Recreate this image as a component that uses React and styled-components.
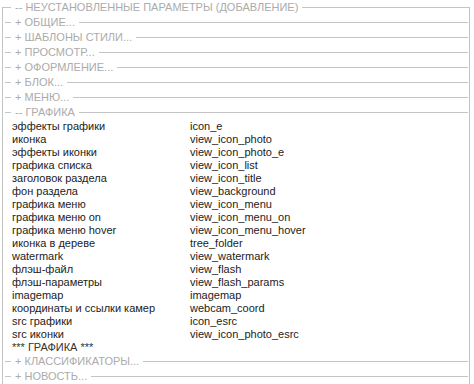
import React from "react";
import styled, { createGlobalStyle } from "styled-components";

const GlobalStyle = createGlobalStyle`
  html, body {
    margin: 0;
    padding: 0;
    background: #fff;
  }
  body {
    font-family: "Liberation Sans", Arial, sans-serif;
    font-size: 11px;
    overflow: hidden;
  }
`;

const LINE = "#c4c4c4";

const Frame = styled.fieldset`
  box-sizing: border-box;
  width: 468px;
  margin: 0 0 0 2px;
  padding: 0 1px 0 2px;
  border: 1px solid ${LINE};
  border-bottom: none;
  min-inline-size: 0;
`;

const Section = styled.fieldset`
  margin: 0;
  padding: 0;
  border: none;
  border-top: 1px solid ${LINE};
  min-inline-size: 0;
`;

const Legend = styled.legend`
  margin-left: 6px;
  padding: 0 4px;
  height: 15px;
  line-height: 15px;
  font-size: 11px;
  color: #ababab;
  text-transform: uppercase;
  white-space: nowrap;
`;

const Table = styled.div`
  display: grid;
  grid-template-columns: 178px 1fr;
  padding: 0 0 0 7px;
  color: #1c1c1c;
  font-size: 11px;
  line-height: 13px;
`;

const Cell = styled.div`
  height: 13px;
  white-space: nowrap;
`;

const Footer = styled.div`
  grid-column: 1 / 3;
  height: 13px;
  color: #333;
  font-size: 11px;
  text-transform: uppercase;
`;

const rows = [
  ["эффекты графики", "icon_e"],
  ["иконка", "view_icon_photo"],
  ["эффекты иконки", "view_icon_photo_e"],
  ["графика списка", "view_icon_list"],
  ["заголовок раздела", "view_icon_title"],
  ["фон раздела", "view_background"],
  ["графика меню", "view_icon_menu"],
  ["графика меню on", "view_icon_menu_on"],
  ["графика меню hover", "view_icon_menu_hover"],
  ["иконка в дереве", "tree_folder"],
  ["watermark", "view_watermark"],
  ["флэш-файл", "view_flash"],
  ["флэш-параметры", "view_flash_params"],
  ["imagemap", "imagemap"],
  ["координаты и ссылки камер", "webcam_coord"],
  ["src графики", "icon_esrc"],
  ["src иконки", "view_icon_photo_esrc"],
];

const before = ["+ Общие...", "+ Шаблоны стили...", "+ Просмотр...", "+ Оформление...", "+ Блок...", "+ Меню..."];
const after = ["+ Классификаторы...", "+ Новость..."];

export default function App() {
  return (
    <>
      <GlobalStyle />
      <Frame>
        <Legend>-- Неустановленные параметры (добавление)</Legend>
        {before.map((t) => (
          <Section key={t}>
            <Legend>{t}</Legend>
          </Section>
        ))}
        <Section>
          <Legend>-- Графика</Legend>
          <Table>
            {rows.map(([a, b]) => (
              <React.Fragment key={b + a}>
                <Cell>{a}</Cell>
                <Cell>{b}</Cell>
              </React.Fragment>
            ))}
            <Footer>*** Графика ***</Footer>
          </Table>
        </Section>
        {after.map((t) => (
          <Section key={t}>
            <Legend>{t}</Legend>
          </Section>
        ))}
      </Frame>
    </>
  );
}
